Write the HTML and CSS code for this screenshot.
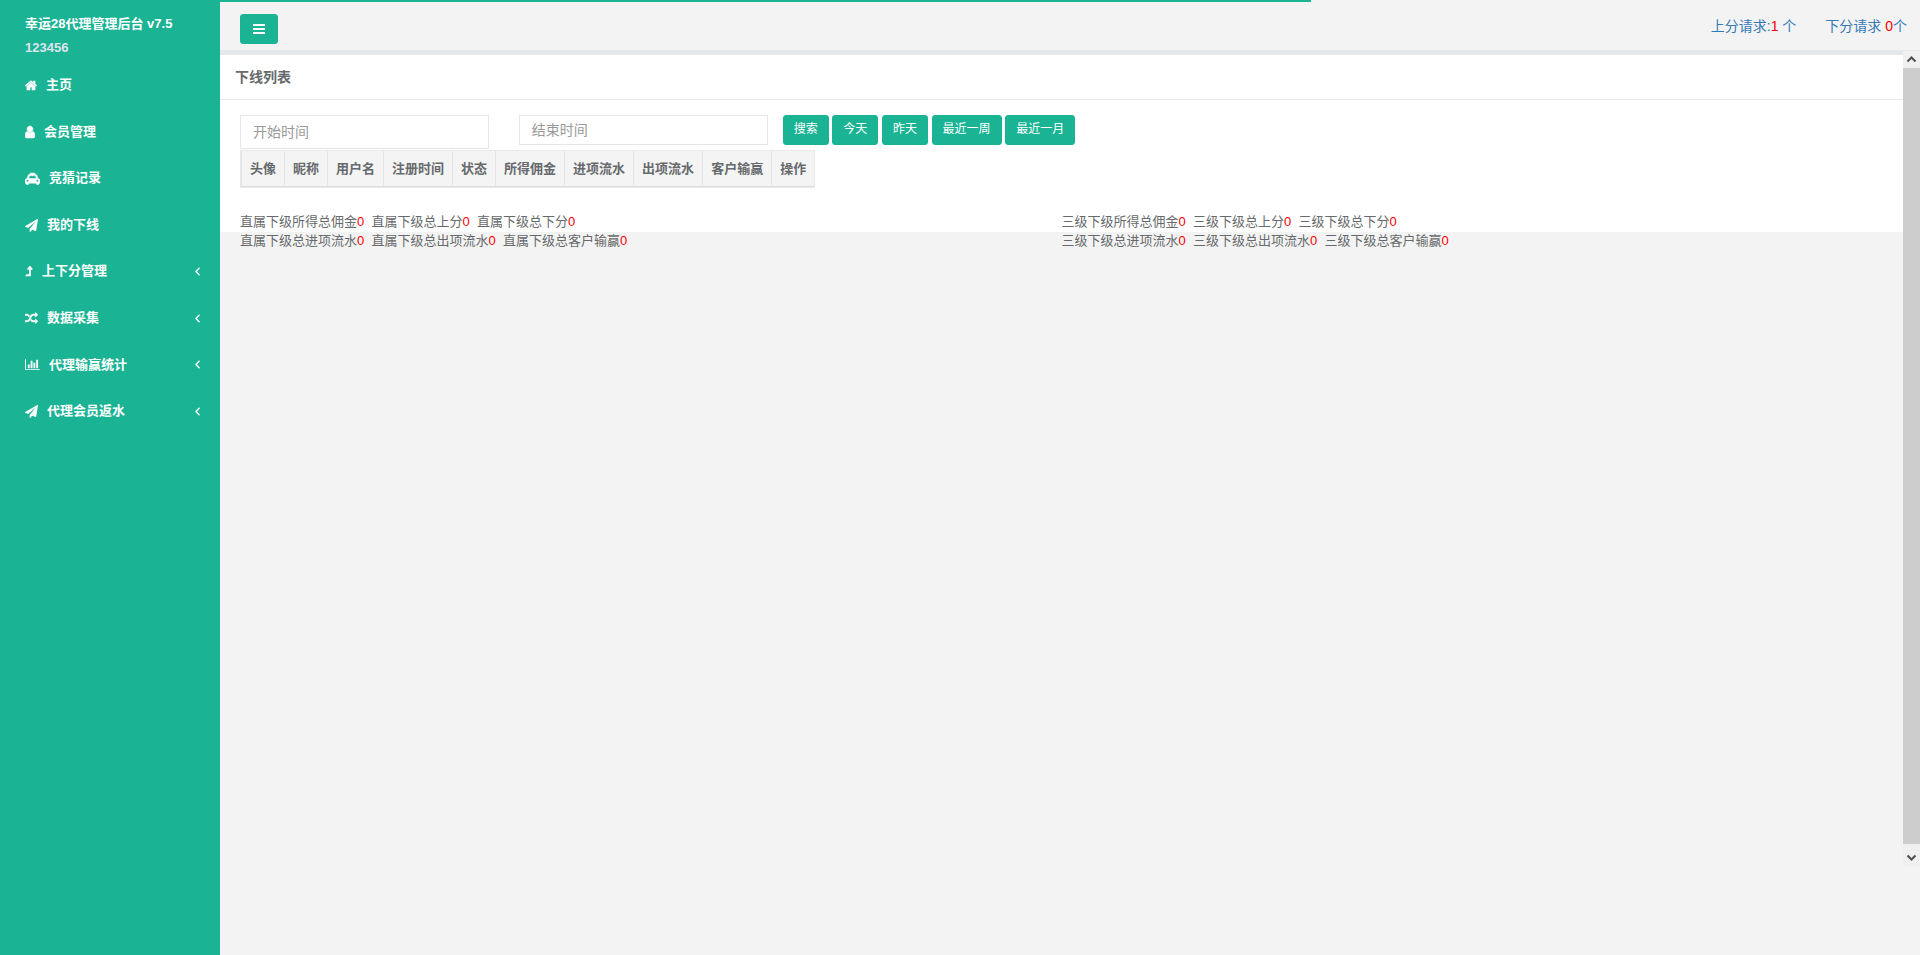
FILE: index.html
```html
<!DOCTYPE html>
<html lang="zh-CN">
<head>
<meta charset="utf-8">
<title>幸运28代理管理后台 v7.5</title>
<link rel="stylesheet" href="styles.css">
</head>
<body>
<div class="progress"></div>
<div class="layout">
  <nav class="sidebar">
    <div class="brand">
      <strong class="brand-name">幸运28代理管理后台 v7.5</strong>
      <strong class="brand-user">123456</strong>
    </div>
    <ul class="menu">
      <li><a href="#"><svg class="icon icon-heavy" width="12" height="13" viewBox="64 0 1664 1792"><path d="M1472 992v480q0 26-19 45t-45 19h-384v-384h-256v384h-384q-26 0-45-19t-19-45v-480q0-1 .5-3t.5-3l575-474 575 474q1 2 1 6zm223-69l-62 74q-8 9-21 11h-3q-13 0-21-7l-692-577-692 577q-12 8-24 7-13-2-21-11l-62-74q-8-10-7-23.500t11-21.500l719-599q32-26 76-26t76 26l244 204v-195q0-14 9-23t23-9h192q14 0 23 9t9 23v408l219 182q10 8 11 21.500t-7 23.500z"/></svg><span>主页</span></a></li>
      <li><a href="#"><svg class="icon icon-heavy" width="10" height="14" viewBox="256 0 1280 1792"><path d="M1536 1399q0 109-62.500 187t-150.500 78h-854q-88 0-150.500-78t-62.500-187q0-85 8.500-160.500t31.500-152 58.500-131 94-89 134.500-34.500q131 128 313 128t313-128q76 0 134.500 34.500t94 89 58.500 131 31.500 152 8.500 160.500zm-256-887q0 159-112.500 271.500t-271.500 112.500-271.500-112.500-112.500-271.500 112.500-271.500 271.500-112.500 271.500 112.500 112.500 271.500z"/></svg><span>会员管理</span></a></li>
      <li><a href="#"><svg class="icon icon-heavy" width="15" height="13" viewBox="0 0 2048 1792"><path fill-rule="evenodd" d="M736 128h576q32 0 32 32v160h90q80 0 140 48t80 124l105 404h65q93 0 158 65t66 159v384q0 32-32 32h-96v64q0 80-56 136t-136 56-136-56-56-136v-64H512v64q0 80-56 136t-136 56-136-56-56-136v-64H32q-32 0-32-32v-384q0-93 65-158t159-66h65l105-404q20-76 80-124t140-48h90V160q0-32 32-32zM352 1056a160 160 0 1 0 0 320a160 160 0 1 0 0-320zM1696 1056a160 160 0 1 0 0 320a160 160 0 1 0 0-320zM516 896h1016l-89-357q-5-27-31-27H636q-26 0-31 27z"/></svg><span>竞猜记录</span></a></li>
      <li><a href="#"><svg class="icon" width="13" height="13" viewBox="0 0 1792 1792"><path d="M1764 11q33 24 27 64l-256 1536q-5 29-32 45-14 8-31 8-11 0-24-5l-453-185-242 295q-18 23-49 23-13 0-22-4-19-7-30.500-23.500t-11.500-36.500v-349l864-1059-1069 925-395-162q-37-14-40-55-2-40 32-59l1664-960q15-9 32-9 20 0 36 11z"/></svg><span>我的下线</span></a></li>
      <li><a href="#"><svg class="icon" width="8" height="13" viewBox="0 0 1024 1792"><path d="M32 1536h704q32 0 32-32V640h192q42 0 58-38t-9-69L689 149q-18-21-49-21t-49 21L271 533q-27 31-9 69 18 38 58 38h192v640H192q-14 0-25 11L7 1483q-12 16-4 34 9 19 29 19z"/></svg><span>上下分管理</span><svg class="arrow" width="5" height="9" viewBox="0 0 5 9"><path d="M4.500 .8L1 4.500l3.500 3.700"/></svg></a></li>
      <li><a href="#"><svg class="icon" width="13" height="13" viewBox="0 0 1792 1792"><path d="M666 481q-60 92-137 273-22-45-37-72.500t-40.500-63.500-51-56.500-63-35-81.500-14.500h-224q-14 0-23-9t-9-23v-192q0-14 9-23t23-9h224q250 0 410 225zm1126 799q0 14-9 23l-320 320q-9 9-23 9-13 0-22.500-9.500t-9.500-22.500v-192q-32 0-85 .5t-81 1-73-1-71-5-64-10.500-63-18.500-58-28.500-59-40-55-53.500-56-69.500q59-93 136-273 22 45 37 72.500t40.500 63.500 51 56.500 63 35 81.500 14.500h256v-192q0-14 9-23t23-9q12 0 24 10l319 319q9 9 9 23zm0-896q0 14-9 23l-320 320q-9 9-23 9-13 0-22.500-9.500t-9.500-22.500v-192h-256q-48 0-87 15t-69 45-51 61.500-45 77.500q-32 62-78 171-29 66-49.500 111t-54 105-64 100-74 83-90 68.500-106.500 42-128 16.500h-224q-14 0-23-9t-9-23v-192q0-14 9-23t23-9h224q48 0 87-15t69-45 51-61.500 45-77.500q32-62 78-171 29-66 49.500-111t54-105 64-100 74-83 90-68.500 106.500-42 128-16.500h256v-192q0-14 9-23t23-9q12 0 24 10l319 319q9 9 9 23z"/></svg><span>数据采集</span><svg class="arrow" width="5" height="9" viewBox="0 0 5 9"><path d="M4.500 .8L1 4.500l3.500 3.700"/></svg></a></li>
      <li><a href="#"><svg class="icon" width="15" height="13" viewBox="0 0 2048 1792"><path d="M640 896v512h-256v-512h256zm384-512v1024h-256v-1024h256zm1024 1152v128h-2048v-1536h128v1408h1920zm-640-896v768h-256v-768h256zm384-384v1152h-256v-1152h256z"/></svg><span>代理输赢统计</span><svg class="arrow" width="5" height="9" viewBox="0 0 5 9"><path d="M4.500 .8L1 4.500l3.500 3.700"/></svg></a></li>
      <li><a href="#"><svg class="icon" width="13" height="13" viewBox="0 0 1792 1792"><path d="M1764 11q33 24 27 64l-256 1536q-5 29-32 45-14 8-31 8-11 0-24-5l-453-185-242 295q-18 23-49 23-13 0-22-4-19-7-30.500-23.500t-11.500-36.500v-349l864-1059-1069 925-395-162q-37-14-40-55-2-40 32-59l1664-960q15-9 32-9 20 0 36 11z"/></svg><span>代理会员返水</span><svg class="arrow" width="5" height="9" viewBox="0 0 5 9"><path d="M4.500 .8L1 4.500l3.500 3.700"/></svg></a></li>
    </ul>
  </nav>

  <div class="page">
    <header class="topbar">
      <button class="btn toggle" type="button" aria-label="菜单"><svg width="12" height="10" viewBox="0 0 12 10"><path d="M0 0h12v2H0zM0 4h12v2H0zM0 8h12v2H0z"/></svg></button>
      <div class="requests">
        <a href="#">上分请求:<span class="num">1</span> 个</a>
        <a href="#">下分请求 <span class="num">0</span>个</a>
      </div>
    </header>

    <div class="frame">
      <main class="panel">
        <h5 class="panel-title">下线列表</h5>
        <div class="panel-body">
          <form class="filters">
            <div class="field"><input class="input" type="text" placeholder="开始时间" aria-label="开始时间"></div>
            <div class="field"><input class="input input-sm" type="text" placeholder="结束时间" aria-label="结束时间"></div>
            <div class="actions">
              <button class="btn" type="button">搜索</button>
              <button class="btn" type="button">今天</button>
              <button class="btn" type="button">昨天</button>
              <button class="btn" type="button">最近一周</button>
              <button class="btn" type="button">最近一月</button>
            </div>
          </form>
          <table class="table">
            <thead>
              <tr><th>头像</th><th>昵称</th><th>用户名</th><th>注册时间</th><th>状态</th><th>所得佣金</th><th>进项流水</th><th>出项流水</th><th>客户输赢</th><th>操作</th></tr>
            </thead>
          </table>
          <div class="stats">
            <div class="stat">直属下级所得总佣金<span class="num">0</span>&nbsp; 直属下级总上分<span class="num">0</span>&nbsp; 直属下级总下分<span class="num">0</span><br>直属下级总进项流水<span class="num">0</span>&nbsp; 直属下级总出项流水<span class="num">0</span>&nbsp; 直属下级总客户输赢<span class="num">0</span></div>
            <div class="stat">三级下级所得总佣金<span class="num">0</span>&nbsp; 三级下级总上分<span class="num">0</span>&nbsp; 三级下级总下分<span class="num">0</span><br>三级下级总进项流水<span class="num">0</span>&nbsp; 三级下级总出项流水<span class="num">0</span>&nbsp; 三级下级总客户输赢<span class="num">0</span></div>
          </div>
        </div>
      </main>
      <div class="scrollbar">
        <svg width="17" height="17" viewBox="0 0 17 17"><path d="M4.500 10.500l4-4 4 4"/></svg>
        <div class="thumb"></div>
        <svg class="down" width="17" height="22" viewBox="0 0 17 22"><path d="M4.500 11.500l4 4 4-4"/></svg>
      </div>
    </div>
  </div>
</div>
</body>
</html>
```

FILE: styles.css
```css
* { box-sizing: border-box; }

body {
  margin: 0;
  background: #f3f3f3;
  color: #676a6c;
  font-family: "Liberation Sans", "Noto Sans CJK SC", sans-serif;
  font-size: 13px;
  line-height: 1.43;
}

a { text-decoration: none; }

.num { color: #f00; }

.progress {
  position: fixed;
  top: 0;
  left: 0;
  width: 68.3%;
  height: 2px;
  background: #1ab394;
}

.layout {
  display: flex;
  min-height: 100vh;
}

/* Sidebar */
.sidebar {
  flex: none;
  width: 220px;
  background: #1ab394;
}

.brand {
  display: flex;
  flex-direction: column;
  gap: 5px;
  padding: 15px 20px 5px 25px;
  color: #fff;
}

.brand-user { color: #dfe4ed; }

.menu {
  margin: 0;
  padding: 0;
  list-style: none;
}

.menu a {
  display: flex;
  align-items: center;
  padding: 14px 20px 14px 25px;
  color: #fff;
  font-weight: 600;
}

.icon {
  margin-right: 9px;
  fill: #fff;
}

.icon-heavy {
  stroke: #fff;
  stroke-width: 60;
}

.arrow {
  margin-left: auto;
  fill: none;
  stroke: #fff;
  stroke-width: 1.3;
}

/* Top bar */
.page {
  flex: 1;
  min-width: 0;
}

.topbar {
  display: flex;
  justify-content: space-between;
  height: 51px;
  padding: 14px 13px 0 20px;
  border-bottom: 1px solid #e4e8eb;
}

.btn {
  height: 30px;
  padding: 0 10px;
  border: 1px solid #1ab394;
  border-radius: 3px;
  background: #1ab394;
  color: #fff;
  font: inherit;
  font-size: 12px;
  vertical-align: top;
}

.toggle {
  display: flex;
  align-items: center;
  justify-content: center;
  width: 38px;
}

.toggle svg { fill: #fff; }

.requests {
  display: flex;
  gap: 29px;
  padding-top: 2px;
  font-size: 14px;
}

.requests a { color: #337ab7; }

/* Content frame */
.frame {
  display: flex;
  height: calc(100vh - 140px);
}

.panel {
  flex: 1;
  min-width: 0;
}

.panel-title {
  margin: 0;
  padding: 12px 15px;
  border-top: 4px solid #e4e8eb;
  background: #fff;
  font-size: 14px;
  line-height: 20px;
}

.panel-body {
  display: flow-root;
  padding: 15px 20px 0;
  border-top: 1px solid #e7eaec;
  background: #fff;
}

.filters {
  display: flex;
  margin: 0 -15px;
}

.field {
  width: 16.6667%;
  padding: 0 15px;
}

.input {
  display: block;
  width: 100%;
  height: 34px;
  padding: 6px 12px;
  border: 1px solid #e5e6e7;
  background: #fff;
  color: inherit;
  font: inherit;
  font-size: 14px;
}

.input-sm { height: 30px; padding: 4px 12px; }

.input::placeholder { color: #999; }

.table {
  margin-top: 1px;
  border: 1px solid #e9e9e9;
  border-spacing: 0;
  background: #f4f4f4;
}

.table th {
  padding: 8px;
  border-right: 1px solid #e5e5e5;
  border-bottom: 1px solid #ddd;
  line-height: 19px;
  white-space: nowrap;
}

.table th:first-child { border-left: 1px solid #e5e5e5; }

.table th:last-child { border-right: 0; }

.stats {
  display: flex;
  margin: 24px 0 -18px;
  line-height: 19px;
}

.stat { flex: 1; }

/* Scrollbar */
.scrollbar {
  display: flex;
  flex-direction: column;
  width: 17px;
  background: #f0f0f0;
}

.scrollbar svg {
  flex: none;
  fill: none;
  stroke: #505050;
  stroke-width: 2;
}

.thumb {
  flex: 1;
  background: #cdcdcd;
}
```
